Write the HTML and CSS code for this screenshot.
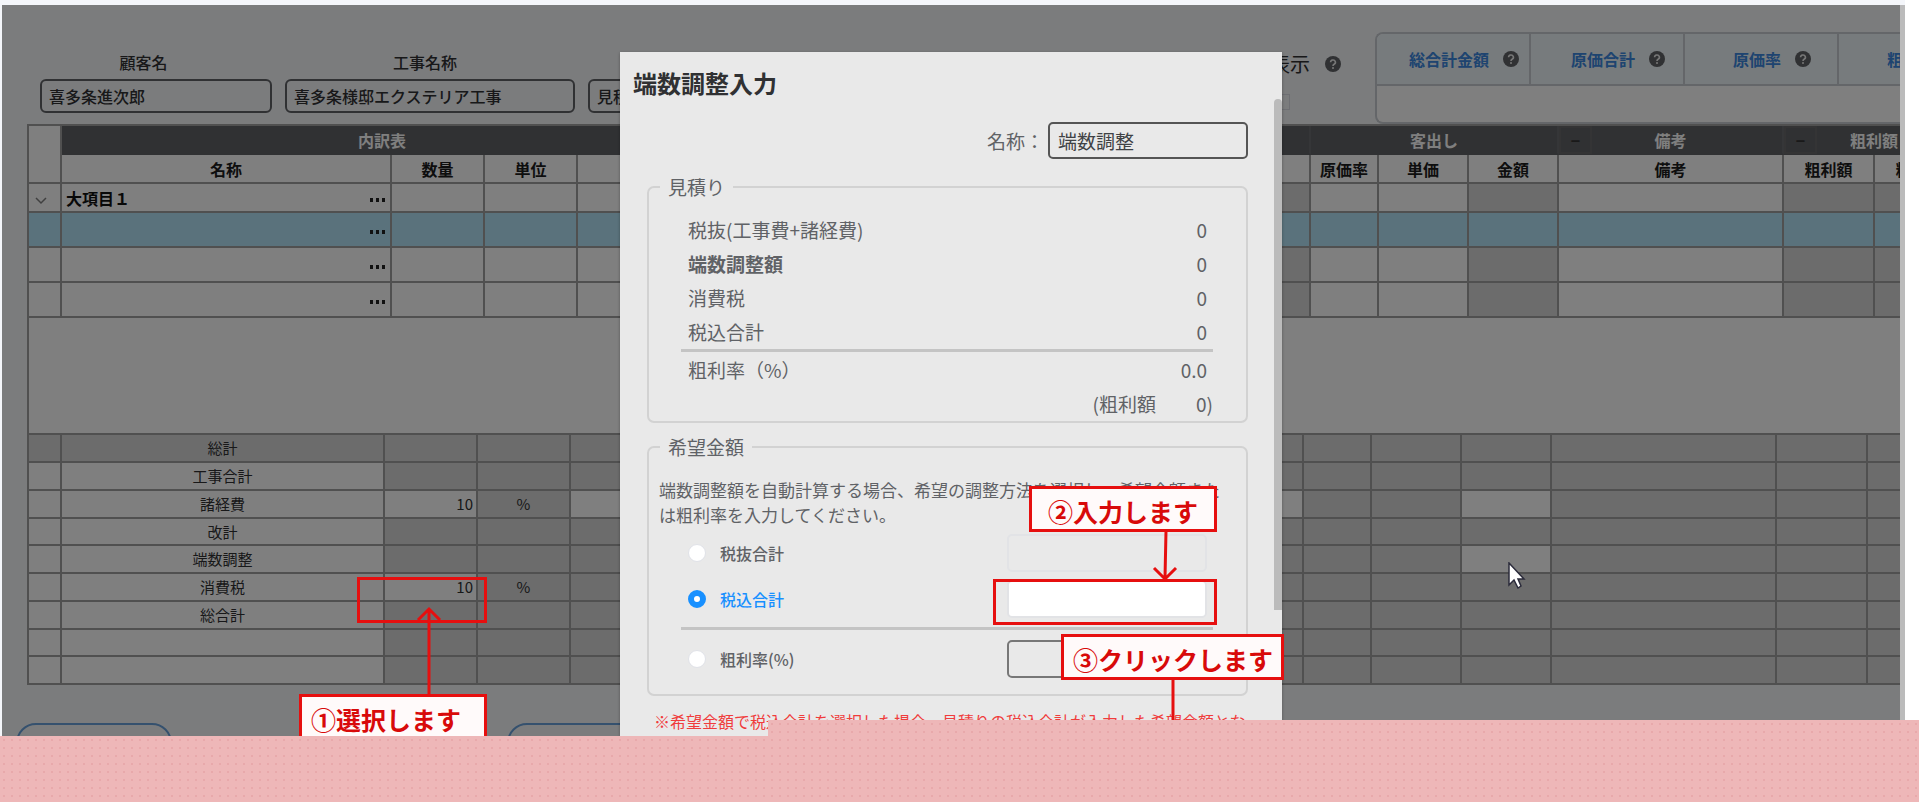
FILE: index.html
```
<!DOCTYPE html>
<html lang="ja">
<head>
<meta charset="utf-8">
<title>端数調整入力</title>
<link rel="stylesheet" href="styles.css">
</head>
<body>
<svg class="defs" width="0" height="0">
  <symbol id="help" viewBox="0 0 16 16">
    <circle cx="8" cy="8" r="8" fill="#606266"/>
    <path d="M5.6 6.3a2.4 2.3 0 1 1 3.5 2c-.8.5-1.1.8-1.1 1.6" fill="none" stroke="#eee" stroke-width="1.6"/>
    <circle cx="8" cy="12" r="1" fill="#eee"/>
  </symbol>
</svg>
<main class="app">
  <div class="screen">
    <header class="toolbar">
      <div class="fields">
        <label class="field customer">顧客名<input type="text" value="喜多条進次郎"></label>
        <label class="field work">工事名称<input type="text" value="喜多条様邸エクステリア工事"></label>
        <label class="field kind">&nbsp;<input type="text" value="見積"></label>
      </div>
      <div class="display">
        <div class="display-title">表示 <svg class="help"><use href="#help"/></svg></div>
        <div class="display-box"></div>
      </div>
      <div class="summary">
        <div class="summary-head">
          <div class="summary-cell">総合計金額<svg class="help"><use href="#help"/></svg></div>
          <div class="summary-cell">原価合計<svg class="help"><use href="#help"/></svg></div>
          <div class="summary-cell">原価率<svg class="help"><use href="#help"/></svg></div>
          <div class="summary-cell">粗利率<svg class="help"><use href="#help"/></svg></div>
        </div>
      </div>
    </header>

    <div class="sheet">
      <table class="detail">
        <colgroup>
          <col class="w-no"><col class="w-name"><col class="w-qty"><col class="w-unit"><col class="w-price"><col class="w-cost">
          <col class="w-rate"><col class="w-sale"><col class="w-sum"><col class="w-memo"><col class="w-profit"><col class="w-profit">
        </colgroup>
        <thead>
          <tr class="group">
            <td rowspan="2" class="corner"></td>
            <th colspan="4">内訳表</th>
            <th></th>
            <th colspan="3">客出し</th>
            <th><div class="fold-head"><button class="fold">−</button>備考</div></th>
            <th colspan="2"><div class="fold-head"><button class="fold">−</button>粗利額</div></th>
          </tr>
          <tr>
            <th>名称</th><th>数量</th><th>単位</th><th></th><th></th>
            <th>原価率</th><th>単価</th><th>金額</th><th>備考</th><th>粗利額</th><th>粗利率</th>
          </tr>
        </thead>
        <tbody>
          <tr>
            <td class="toggle"><svg width="12" height="8" viewBox="0 0 12 8"><path d="M1 1l5 5 5-5" fill="none" stroke="#808080" stroke-width="1.5"/></svg></td>
            <td class="name"><div>大項目１<button class="more" aria-label="メニュー"></button></div></td>
            <td></td><td></td><td></td><td class="calc"></td><td></td><td></td><td class="calc"></td><td></td><td class="calc"></td><td class="calc"></td>
          </tr>
          <tr class="tall selected">
            <td></td><td class="name"><div><button class="more" aria-label="メニュー"></button></div></td>
            <td></td><td></td><td></td><td></td><td></td><td></td><td></td><td></td><td></td><td></td>
          </tr>
          <tr class="tall">
            <td></td><td class="name"><div><button class="more" aria-label="メニュー"></button></div></td>
            <td></td><td></td><td></td><td class="calc"></td><td></td><td></td><td class="calc"></td><td></td><td class="calc"></td><td class="calc"></td>
          </tr>
          <tr class="tall">
            <td></td><td class="name"><div><button class="more" aria-label="メニュー"></button></div></td>
            <td></td><td></td><td></td><td class="calc"></td><td></td><td></td><td class="calc"></td><td></td><td class="calc"></td><td class="calc"></td>
          </tr>
        </tbody>
      </table>
      <div class="blank"></div>
      <table class="total">
        <colgroup>
          <col class="w-no"><col class="w-label"><col class="w-qty"><col class="w-unit"><col class="w-mid">
          <col class="w-rate"><col class="w-sale"><col class="w-sum"><col class="w-memo"><col class="w-profit"><col class="w-profit">
        </colgroup>
        <tbody>
          <tr class="all"><td></td><td>総計</td><td></td><td></td><td></td><td></td><td></td><td></td><td></td><td></td><td></td></tr>
          <tr><td></td><td>工事合計</td><td></td><td></td><td></td><td></td><td></td><td></td><td></td><td></td><td></td></tr>
          <tr><td></td><td>諸経費</td><td class="edit num">10</td><td>%</td><td class="edit"></td><td></td><td></td><td class="edit"></td><td></td><td></td><td></td></tr>
          <tr><td></td><td>改計</td><td></td><td></td><td></td><td></td><td></td><td></td><td></td><td></td><td></td></tr>
          <tr><td></td><td>端数調整</td><td></td><td></td><td></td><td></td><td></td><td class="edit"></td><td></td><td></td><td></td></tr>
          <tr><td></td><td>消費税</td><td class="edit num">10</td><td>%</td><td></td><td></td><td></td><td></td><td></td><td></td><td></td></tr>
          <tr><td></td><td>総合計</td><td></td><td></td><td></td><td></td><td></td><td></td><td></td><td></td><td></td></tr>
          <tr><td></td><td></td><td></td><td></td><td></td><td></td><td></td><td></td><td></td><td></td><td></td></tr>
          <tr><td></td><td></td><td></td><td></td><td></td><td></td><td></td><td></td><td></td><td></td><td></td></tr>
        </tbody>
      </table>
    </div>
    <div class="actions">
      <button class="action" aria-label="戻る"></button>
      <button class="action wide" aria-label="保存"></button>
    </div>

    <div class="backdrop">
      <form class="dialog">
        <h1 class="dialog-title">端数調整入力</h1>
        <div class="dialog-body">
          <label class="title-row">名称：<input type="text" value="端数調整"></label>
          <fieldset>
            <legend>見積り</legend>
            <div class="rows">
              <div class="row"><span>税抜(工事費+諸経費)</span><span>0</span></div>
              <div class="row"><b>端数調整額</b><span>0</span></div>
              <div class="row"><span>消費税</span><span>0</span></div>
              <div class="row"><span>税込合計</span><span>0</span></div>
              <hr>
              <div class="row"><span>粗利率（%）</span><span>0.0</span></div>
              <div class="row profit"><span>(粗利額</span><span>0)</span></div>
            </div>
          </fieldset>
          <fieldset class="wish">
            <legend>希望金額</legend>
            <p class="guide">端数調整額を自動計算する場合、希望の調整方法を選択し、希望金額また<br>は粗利率を入力してください。</p>
            <div class="rows">
              <div class="choice"><label><input type="radio" name="way">税抜合計</label><input type="text" class="off" aria-label="税抜合計" disabled></div>
              <div class="choice"><label class="on"><input type="radio" name="way" checked>税込合計</label><input type="text" class="active" aria-label="税込合計"></div>
              <hr>
              <div class="choice"><label><input type="radio" name="way">粗利率(%)</label><input type="text" class="rate" aria-label="粗利率"></div>
            </div>
          </fieldset>
          <p class="note">※希望金額で税込合計を選択した場合、見積りの税込合計が入力した希望金額とな</p>
        </div>
        <div class="thumb"></div>
      </form>
    </div>
  </div>

  <svg class="arrows" width="1300" height="740">
    <g fill="none" stroke="#e60f0f" stroke-width="3">
      <rect x="358.5" y="578.5" width="127" height="43"/>
      <path d="M429 694V610M418 620l11-11 11 11"/>
      <rect x="994.5" y="580.5" width="221" height="43"/>
      <path d="M1166 531l-1 47M1154 568l11 11 11-11"/>
      <path d="M1173 678v60"/>
    </g>
  </svg>
  <svg class="pointer" width="18" height="28" viewBox="0 0 18 28"><path d="M1 1v22l5-5 4 8 3-2-3-7h6z" fill="#fff" stroke="#2b2b3b" stroke-width="1.5"/></svg>
  <div class="callout select">①選択します</div>
  <div class="callout enter">②入力します</div>
  <div class="callout click">③クリックします</div>
</main>
<footer class="band"></footer>
</body>
</html>
```
FILE: styles.css
```
* {
  box-sizing: border-box;
}
body {
  margin: 0;
  height: 100vh;
  display: flex;
  flex-direction: column;
  overflow: hidden;
  background: #fff;
  color: #303133;
  font-family: "Noto Sans CJK JP", sans-serif;
  font-size: 16px;
}
input, button {
  font: inherit;
  color: inherit;
}
.defs {
  position: absolute;
}
.app {
  position: relative;
  flex: 1;
  min-height: 0;
  margin-right: 14px;
  padding: 5px 0 0 2px;
  background: #f4f6fa;
}
.screen {
  position: relative;
  height: 100%;
  overflow: hidden;
  background: #f6f8fb;
  border-right: 5px solid #bbb;
}

/* toolbar */
.toolbar {
  display: flex;
  height: 119px;
  padding-left: 38px;
}
.fields {
  flex: 1;
  display: flex;
  gap: 13px;
  padding-top: 45px;
}
.field {
  display: flex;
  flex-direction: column;
  gap: 5px;
  text-align: center;
  line-height: 24px;
  font-weight: 500;
}
.field input {
  width: 100%;
  height: 34px;
  padding: 0 7px;
  border: 2px solid #606266;
  border-radius: 6px;
  background: none;
}
.customer {
  width: 232px;
  text-indent: -25px;
}
.work {
  width: 290px;
  text-indent: -10px;
}
.customer input, .work input {
  text-indent: 0;
}
.kind {
  width: 230px;
}
.display {
  width: 105px;
  padding-top: 46px;
}
.display-title {
  display: flex;
  align-items: center;
  gap: 15px;
  font-size: 20px;
  line-height: 26px;
}
.display-box {
  width: 20px;
  height: 16px;
  margin-top: 17px;
  border: 1px solid #dcdfe6;
}
.help {
  width: 16px;
  height: 16px;
  flex: none;
}
.summary {
  width: 525px;
  height: 92px;
  margin-top: 27px;
  overflow: hidden;
  border: 2px solid #c8cdd2;
  border-right: 0;
  border-radius: 8px 0 0 8px;
  background: #fff;
}
.summary-head {
  display: flex;
  width: 640px;
  height: 52px;
  background: #eff7fb;
  border-bottom: 2px solid #c8cdd2;
}
.summary-cell {
  width: 154px;
  display: flex;
  align-items: center;
  justify-content: center;
  gap: 14px;
  padding-left: 22px;
  border-right: 2px solid #c8cdd2;
  color: #3c88e0;
  font-weight: bold;
}

/* estimate sheet */
.sheet {
  margin-left: 25px;
  overflow: hidden;
  background: #fff;
  border-left: 2px solid #a0a0a0;
}
table {
  table-layout: fixed;
  border-collapse: separate;
  border-spacing: 0;
  border-top: 2px solid #a0a0a0;
}
.detail {
  width: 1937px;
}
.total {
  width: 1930px;
}
th, td {
  padding: 0;
  height: 29px;
  line-height: 24px;
  border-right: 2px solid #a0a0a0;
  border-bottom: 2px solid #a0a0a0;
}
thead th {
  color: #1c1c1c;
}
.group th {
  background: #606266;
  color: #fff;
  border-color: #6a6c70;
  border-bottom-color: #606266;
}
.tall td {
  height: 35px;
}
.calc, .total td {
  background: #d8d8d8;
}
.selected td {
  background: #b4e5f8;
}
.toggle {
  padding-left: 6px;
}
.name {
  font-weight: bold;
  color: #101010;
}
.name div {
  display: flex;
  justify-content: space-between;
  align-items: center;
  padding: 0 5px 0 4px;
}
.more {
  width: 15px;
  height: 4px;
  margin: 4px 0 0 auto;
  padding: 0;
  border: 0;
  background: repeating-linear-gradient(90deg, #222 0 3px, transparent 3px 6px);
}
.fold-head {
  position: relative;
}
.fold {
  position: absolute;
  left: 0;
  top: -2px;
  width: 33px;
  height: 28px;
  padding: 0;
  border: 2px solid #68686a;
  background: none;
  color: #333;
}
.w-no { width: 33px; }
.w-name { width: 330px; }
.w-label { width: 323px; }
.w-qty { width: 93px; }
.w-unit { width: 93px; }
.w-price { width: 126px; }
.w-cost { width: 607px; }
.w-mid { width: 733px; }
.w-rate { width: 68px; }
.w-sale { width: 90px; }
.w-sum { width: 90px; }
.w-memo { width: 225px; }
.w-profit { width: 91px; }
.blank {
  height: 115px;
}
.total {
  font-size: 15px;
  text-align: center;
}
.total td {
  height: 28px;
}
.total tr:nth-child(4n) td {
  height: 27px;
}
.total tr:not(.all) td:nth-child(-n+2), .total .edit {
  background: #fff;
}
.total .num {
  padding-right: 3px;
  text-align: right;
}
.actions {
  display: flex;
  gap: 335px;
  padding: 38px 0 0 14px;
}
.action {
  width: 156px;
  height: 40px;
  border: 2px solid #6aa2dc;
  border-radius: 20px;
  background: none;
}
.wide {
  width: 240px;
}

/* dialog */
.backdrop {
  position: absolute;
  inset: 0;
  display: flex;
  justify-content: center;
  padding: 47px 0 0 0;
  background: rgba(0, 0, 0, .5);
}
.dialog {
  position: relative;
  width: 662px;
  background: #e9e9e9;
  color: #606266;
  font-size: 19px;
  box-shadow: 0 1px 3px rgba(0, 0, 0, .3);
}
.dialog-title {
  margin: 0;
  padding: 13px 13px 0;
  font-size: 24px;
  line-height: 36px;
  color: #303133;
}
.dialog-body {
  padding: 21px 34px 0 27px;
}
.title-row {
  display: flex;
  justify-content: flex-end;
  align-items: center;
  gap: 4px;
}
.title-row input {
  width: 200px;
  height: 37px;
  padding: 0 8px;
  border: 2px solid #555;
  border-radius: 5px;
  background: none;
  color: #404245;
}
fieldset {
  margin: 15px 0 0;
  padding: 0;
  min-width: 0;
  border: 2px solid #d2d2d2;
  border-radius: 7px;
}
legend {
  margin-left: 11px;
  padding: 0 8px;
  line-height: 26px;
}
.rows {
  margin: 13px 33px 0 32px;
}
.row {
  display: flex;
  justify-content: space-between;
  padding: 0 6px 0 7px;
  line-height: 34px;
}
.profit {
  justify-content: flex-end;
  gap: 40px;
  padding-right: 0;
}
hr {
  height: 3px;
  margin: 0 0 1px;
  border: 0;
  background: #c4c4c4;
}
.wish {
  margin-top: 11px;
}
.guide {
  margin: 17px 0 0 10px;
  font-size: 17px;
  line-height: 25px;
  white-space: nowrap;
}
.wish .rows {
  margin-top: 7px;
  padding-bottom: 16px;
}
.wish hr {
  margin: 9px 0 10px;
}
.choice {
  display: flex;
  justify-content: space-between;
  align-items: center;
  padding: 0 6px 0 7px;
  font-size: 16px;
}
.choice + .choice {
  margin-top: 8px;
}
.choice label {
  display: flex;
  align-items: center;
  gap: 14px;
  font-weight: 500;
}
.choice .on {
  color: #1890ff;
}
.choice [type=radio] {
  appearance: none;
  width: 18px;
  height: 18px;
  margin: 0;
  border: 1px solid #e0e2e8;
  border-radius: 50%;
  background: #fff;
}
.choice [type=radio]:checked {
  border: 6px solid #1890ff;
}
.choice [type=text] {
  width: 200px;
  height: 38px;
  border: 2px solid #e2e3e6;
  border-radius: 5px;
  background: none;
}
.choice .active {
  background: #fff;
}
.choice .rate {
  border-color: #777;
}
.note {
  margin: 12px 0 0 7px;
  font-size: 16px;
  line-height: 26px;
  white-space: nowrap;
  color: #f03c3c;
}
.thumb {
  position: absolute;
  top: 47px;
  right: 0;
  width: 8px;
  height: 511px;
  border-radius: 4px 4px 0 0;
  background: #bbb;
}

/* step marks over the screen */
.arrows {
  position: absolute;
  left: 0;
  top: 0;
}
.pointer {
  position: absolute;
  left: 1508px;
  top: 562px;
}
.callout {
  position: absolute;
  height: 46px;
  padding: 4px 0 0 9px;
  border: 3px solid #e60f0f;
  background: #fffafa;
  color: #d80a0a;
  font-size: 25px;
  font-weight: bold;
  line-height: 36px;
  white-space: nowrap;
}
.select {
  left: 299px;
  top: 694px;
  width: 188px;
}
.enter {
  left: 1029px;
  top: 486px;
  width: 188px;
  padding-left: 16px;
}
.click {
  left: 1061px;
  top: 634px;
  width: 223px;
}

/* dotted pink band */
.band, .band::before {
  background: radial-gradient(circle, #e8a9ab 1px, transparent 1px) 0 0 / 8px 8px #eeb7b8;
}
.band {
  position: relative;
  height: 66px;
}
.band::before {
  content: "";
  position: absolute;
  left: 40%;
  right: 0;
  top: -16px;
  height: 16px;
}
```
